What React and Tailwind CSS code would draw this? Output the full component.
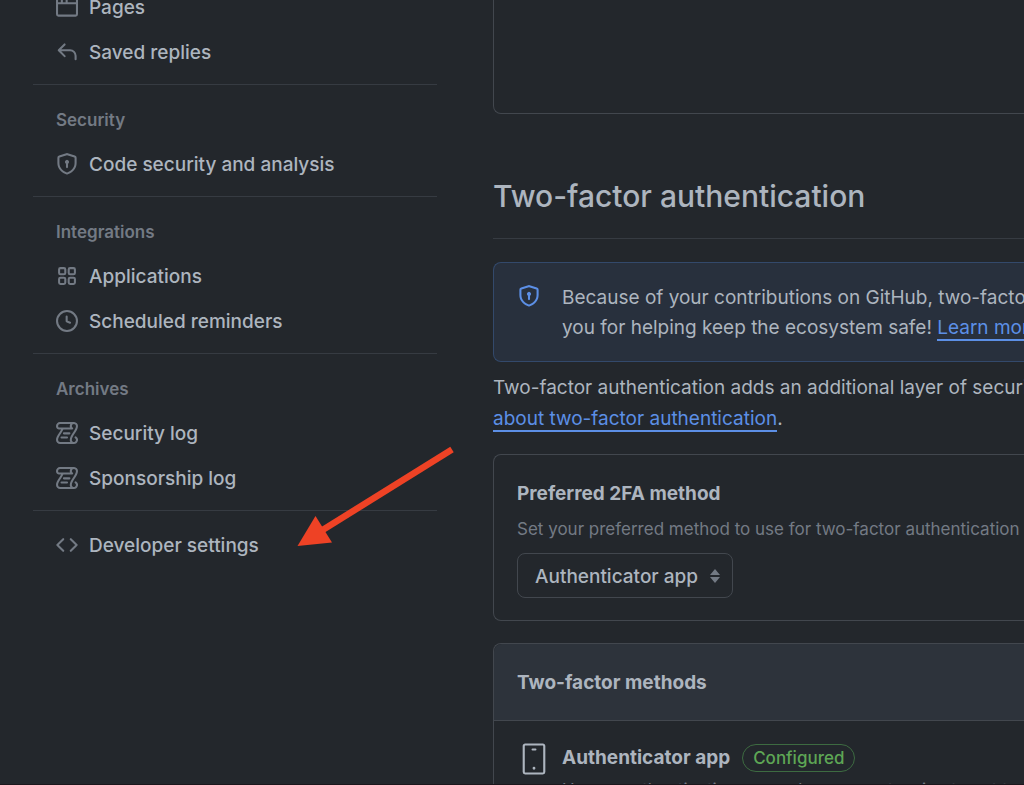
import React from "react";

function Icon({ name, className }) {
  return (
    <svg viewBox="0 0 16 16" fill="currentColor" aria-hidden="true" className={"shrink-0 " + className}>
      {icons[name]}
    </svg>
  );
}

const icons = {
  browser: (
    <path d="M0 2.75C0 1.784.784 1 1.75 1h12.5c.966 0 1.75.784 1.75 1.75v10.5A1.75 1.75 0 0 1 14.25 15H1.75A1.75 1.75 0 0 1 0 13.25ZM14.5 6h-13v7.25c0 .138.112.25.25.25h12.5a.25.25 0 0 0 .25-.25Zm-6-3.5v2h6V2.75a.25.25 0 0 0-.25-.25ZM5 2.5v2h2v-2Zm-3.25 0a.25.25 0 0 0-.25.25V4.5h2v-2Z" />
  ),
  reply: (
    <path d="M6.78 1.97a.75.75 0 0 1 0 1.06L3.81 6h6.44A4.75 4.75 0 0 1 15 10.75v2.5a.75.75 0 0 1-1.5 0v-2.5a3.25 3.25 0 0 0-3.25-3.25H3.81l2.97 2.97a.749.749 0 0 1-.326 1.275.749.749 0 0 1-.734-.215L1.47 7.28a.75.75 0 0 1 0-1.06l4.25-4.25a.75.75 0 0 1 1.06 0Z" />
  ),
  shield: (
    <path d="m8.533.133 5.25 1.68A1.75 1.75 0 0 1 15 3.48V7c0 1.566-.32 3.182-1.303 4.682-.983 1.498-2.585 2.813-5.032 3.855a1.697 1.697 0 0 1-1.33 0c-2.447-1.042-4.049-2.357-5.032-3.855C1.32 10.182 1 8.566 1 7V3.48a1.755 1.755 0 0 1 1.217-1.667l5.25-1.68a1.748 1.748 0 0 1 1.066 0Zm-.61 1.429.001.001-5.25 1.68a.251.251 0 0 0-.174.237V7c0 1.36.275 2.666 1.057 3.859.784 1.194 2.121 2.342 4.366 3.298a.196.196 0 0 0 .154 0c2.245-.957 3.582-2.103 4.366-3.297C13.225 9.666 13.5 8.358 13.5 7V3.48a.25.25 0 0 0-.174-.238l-5.25-1.68a.25.25 0 0 0-.153 0ZM9.5 6.5c0 .536-.286 1.032-.75 1.3v2.45a.75.75 0 0 1-1.5 0V7.8A1.5 1.5 0 1 1 9.5 6.5Z" />
  ),
  apps: (
    <g fill="none" stroke="currentColor" strokeWidth="1.5">
      <rect x="2.25" y="2.25" width="4.5" height="4.5" rx="1" />
      <rect x="9.25" y="2.25" width="4.5" height="4.5" rx="1" />
      <rect x="2.25" y="9.25" width="4.5" height="4.5" rx="1" />
      <rect x="9.25" y="9.25" width="4.5" height="4.5" rx="1" />
    </g>
  ),
  clock: (
    <path d="M8 0a8 8 0 1 1 0 16A8 8 0 0 1 8 0ZM1.5 8a6.5 6.5 0 1 0 13 0 6.5 6.5 0 0 0-13 0Zm7-3.25v2.992l2.028.812a.75.75 0 0 1-.557 1.392l-2.5-1A.751.751 0 0 1 7 8.25v-3.5a.75.75 0 0 1 1.5 0Z" />
  ),
  log: (
    <>
      <path d="M5 8.25a.75.75 0 0 1 .75-.75h4a.75.75 0 0 1 0 1.5h-4A.75.75 0 0 1 5 8.25ZM4 10.5A.75.75 0 0 0 4 12h4a.75.75 0 0 0 0-1.5H4Z" />
      <path d="M13-.005c1.654 0 3 1.328 3 3 0 .982-.338 1.933-.783 2.818-.443.879-1.028 1.758-1.582 2.588l-.011.017c-.568.853-1.104 1.659-1.501 2.446-.398.789-.623 1.494-.623 2.136a1.5 1.5 0 1 0 2.333-1.248.75.75 0 0 1 .834-1.246A3 3 0 0 1 13 16H3a3 3 0 0 1-3-3c0-1.582.891-3.135 1.777-4.506.209-.322.418-.637.623-.946.473-.709.923-1.386 1.287-2.048H2.51c-.576 0-1.381-.133-1.907-.783A2.68 2.68 0 0 1 0 2.995a3 3 0 0 1 3-3Zm0 1.5a1.5 1.5 0 0 0-1.5 1.5c0 .476.223.834.667 1.132A.75.75 0 0 1 11.75 5.5H5.368c-.467 1.003-1.141 2.015-1.773 2.963-.192.289-.381.571-.558.845C2.13 10.711 1.5 11.916 1.5 13A1.5 1.5 0 0 0 3 14.5h7.401A2.989 2.989 0 0 1 10 13c0-.979.338-1.928.784-2.812.441-.874 1.023-1.748 1.575-2.576l.017-.026c.568-.853 1.103-1.658 1.501-2.448.398-.79.623-1.497.623-2.143 0-.838-.669-1.5-1.5-1.5Zm-10 0a1.5 1.5 0 0 0-1.5 1.5c0 .321.1.569.27.778.097.12.325.227.74.227h7.674A2.737 2.737 0 0 1 10 2.995c0-.546.146-1.059.401-1.5Z" />
    </>
  ),
  code: (
    <path d="m11.28 3.22 4.25 4.25a.75.75 0 0 1 0 1.06l-4.25 4.25a.749.749 0 0 1-1.275-.326.749.749 0 0 1 .215-.734L13.94 8l-3.72-3.72a.749.749 0 0 1 .326-1.275.749.749 0 0 1 .734.215Zm-6.56 0a.751.751 0 0 1 1.042.018.751.751 0 0 1 .018 1.042L2.06 8l3.72 3.72a.749.749 0 0 1-.326 1.275.749.749 0 0 1-.734-.215L.47 8.53a.75.75 0 0 1 0-1.06Z" />
  ),
};

const sections = [
  { items: [["browser", "Pages"], ["reply", "Saved replies"]] },
  { title: "Security", items: [["shield", "Code security and analysis"]] },
  { title: "Integrations", items: [["apps", "Applications"], ["clock", "Scheduled reminders"]] },
  { title: "Archives", items: [["log", "Security log"], ["log", "Sponsorship log"]] },
  { items: [["code", "Developer settings"]] },
];

function Sidebar() {
  return (
    <nav aria-label="Settings" className="-mt-[15px] w-[404px] shrink-0">
      {sections.map((section, i) => (
        <section key={i}>
          {i > 0 && <hr className="mt-[9px] mb-3 border-t border-[#363b42]" />}
          {section.title && (
            <h3 className="flex h-[45px] items-center px-[23px] pt-[2px] text-[17px] font-semibold text-[#737a84]">
              {section.title}
            </h3>
          )}
          <ul>
            {section.items.map(([icon, label]) => (
              <li key={label}>
                <a href="#" className="flex h-[45px] items-center gap-[11px] px-[23px] pb-[2px] text-[19px] font-medium">
                  <Icon name={icon} className="size-[22px] text-[#737a84]" />
                  <span className="pt-1">{label}</span>
                </a>
              </li>
            ))}
          </ul>
        </section>
      ))}
    </nav>
  );
}

const link = "border-b-2 border-[#5c8fe6] text-[#5c8fe6]";

export default function App() {
  return (
    <div className="relative flex h-screen gap-14 overflow-hidden border-b border-[#1c171d] bg-[#23272c] pl-[33px] font-['Inter',sans-serif] text-[#adb5bf]">
      <Sidebar />

      <main className="min-w-0 flex-1 whitespace-nowrap">
        <div className="h-[114px] rounded-bl-lg border-b border-l border-[#42474e]" />

        <h2 className="mt-[58px] border-b border-[#363b42] pb-[18px] text-[30px] leading-[48px] font-medium">
          Two-factor authentication
        </h2>

        <div className="mt-[23px] flex items-start gap-[22px] rounded-l-lg border border-r-0 border-[#33496b] bg-[#28303d] pt-5 pb-[18px] pl-6">
          <Icon name="shield" className="mt-[2px] size-[22px] text-[#5c8fe6]" />
          <p className="text-[19px] leading-[30px]">
            Because of your contributions on GitHub, two-factor authentication is required. Thank
            <br />
            you for helping keep the ecosystem safe!{" "}
            <a href="#" className={link}>Learn more about our two-factor initiative</a>
          </p>
        </div>

        <p className="mt-[10px] text-[19px] leading-[31px]">
          Two-factor authentication adds an additional layer of security to your account. Learn more
          <br />
          <a href="#" className={link}>about two-factor authentication</a>.
        </p>

        <section className="mt-5 rounded-l-lg border border-r-0 border-[#42474e] pt-[23px] pb-[22px] pl-[23px]">
          <label htmlFor="method" className="block pt-px text-[19px] leading-[30px] font-bold">
            Preferred 2FA method
          </label>
          <p className="mt-[7px] text-[17px] leading-[26px] text-[#737a84]">
            Set your preferred method to use for two-factor authentication when signing into GitHub.
          </p>
          <div className="relative mt-[11px] w-[216px]">
            <select
              id="method"
              className="block h-[45px] w-full appearance-none rounded-lg border border-[#42474e] bg-transparent pt-1 pl-[17px] text-[19px] font-medium"
            >
              <option>Authenticator app</option>
            </select>
            <svg viewBox="0 0 10 14" fill="#737a84" aria-hidden="true" className="pointer-events-none absolute top-4 right-[13px] h-[14px] w-[10px]">
              <path d="M5 0 10 6H0ZM5 14 0 8h10Z" />
            </svg>
          </div>
        </section>

        <section className="mt-[22px] rounded-tl-lg border border-r-0 border-b-0 border-[#42474e]">
          <h3 className="rounded-tl-lg border-b border-[#42474e] bg-[#2d333b] pt-6 pb-[22px] pl-[23px] text-[19px] leading-[30px] font-bold">
            Two-factor methods
          </h3>
          <div className="flex gap-[11px] pt-[21px] pl-[23px]">
            <svg viewBox="0 0 24 24" fill="currentColor" aria-hidden="true" className="size-[34px] shrink-0">
              <path d="M10.25 5.25A.75.75 0 0 1 11 4.5h2A.75.75 0 0 1 13 6h-2a.75.75 0 0 1-.75-.75ZM12 19.5a1 1 0 1 0 0-2 1 1 0 0 0 0 2Z" />
              <path d="M4 2.75C4 1.784 4.784 1 5.75 1h12.5c.966 0 1.75.784 1.75 1.75v18.5A1.75 1.75 0 0 1 18.25 23H5.75A1.75 1.75 0 0 1 4 21.25Zm1.75-.25a.25.25 0 0 0-.25.25v18.5c0 .138.112.25.25.25h12.5a.25.25 0 0 0 .25-.25V2.75a.25.25 0 0 0-.25-.25Z" />
            </svg>
            <div>
              <div className="flex items-center gap-3 pt-px">
                <h4 className="text-[19px] leading-[30px] font-bold">Authenticator app</h4>
                <span className="rounded-full border border-[#3d6b41] px-[10px] text-[17px] leading-[26px] font-medium text-[#5ea655]">
                  Configured
                </span>
              </div>
              <p className="mt-1 text-[17px] leading-[26px] text-[#737a84]">
                Use an authentication app or browser extension to get two-factor authentication codes when prompted.
              </p>
            </div>
          </div>
        </section>
      </main>

      <svg viewBox="0 0 160 104" aria-hidden="true" className="pointer-events-none absolute top-[445px] left-[296px] h-[104px] w-[160px]">
        <path d="M156 4.5 25 86" stroke="#ee4225" strokeWidth="6.5" />
        <path d="M1.5 101 19.5 71 36 97.5Z" fill="#ee4225" />
      </svg>
    </div>
  );
}
